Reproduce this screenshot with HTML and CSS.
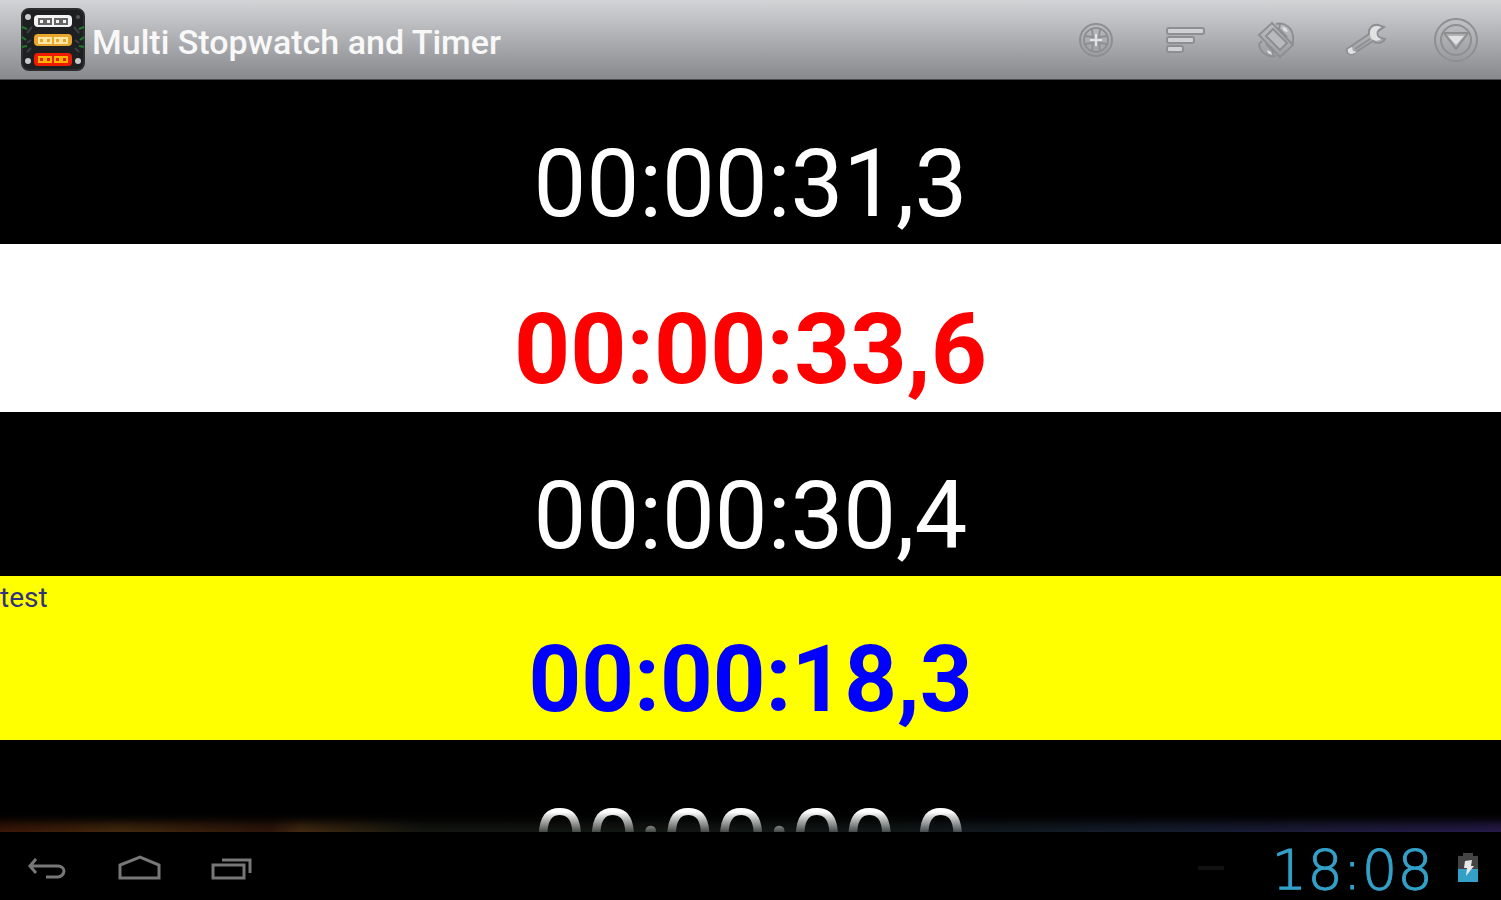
FILE: index.html
```
<!DOCTYPE html>
<html lang="en">
  <head>
    <meta charset="utf-8">
    <title>Multi Stopwatch and Timer</title>
    <link rel="stylesheet" href="styles.css">
  </head>
  <body>
    <header class="actionbar">
      <svg class="logo" width="66" height="66" viewBox="0 0 66 66" aria-hidden="true">
        <rect x="2" y="2" width="62" height="61" rx="7" fill="#1d1f20" stroke="#2c2d2f" stroke-width="2"/>
        <rect x="14" y="8" width="38" height="12" rx="4" fill="#f4f4f4"/>
        <rect x="14" y="27" width="38" height="12" rx="4" fill="#e9a62c"/>
        <rect x="14" y="46" width="38" height="13" rx="4" fill="#ee1c00"/>
        <g fill="none" stroke-width="2">
          <path d="M19 12h5v5h-5zM26 12h5v5h-5zM35 12h5v5h-5zM42 12h5v5h-5z" stroke="#666"/>
          <path d="M19 31h5v5h-5zM26 31h5v5h-5zM35 31h5v5h-5zM42 31h5v5h-5z" stroke="#ffe7a6"/>
          <path d="M19 50h5v5h-5zM26 50h5v5h-5zM35 50h5v5h-5zM42 50h5v5h-5z" stroke="#ffb300"/>
          <path d="M2 20l5 2M2 30l4 3M2 40l5-1M64 20l-5 2M64 30l-4 3M64 40l-5-1" stroke="#1f7a2a"/>
          <path d="M7 26l5-6M7 36l4-3M7 45l4-4M59 26l-5-6M59 36l-4-3M59 45l-4-4" stroke="#3d4042"/>
        </g>
        <g fill="#c9cacb">
          <circle cx="8" cy="10" r="3"/>
          <circle cx="58" cy="10" r="2" fill="#555"/>
          <circle cx="8" cy="54" r="3"/>
          <circle cx="58" cy="54" r="3"/>
        </g>
      </svg>
      <h1 class="title">Multi Stopwatch and Timer</h1>
      <div class="actions">
        <button class="action" aria-label="Add">
          <svg width="44" height="44" viewBox="0 0 44 44">
            <circle class="line" cx="22" cy="22" r="16"/>
            <circle class="line" cx="22" cy="22" r="12"/>
            <path class="line" d="M18 11l1 8-8-1M26 11l-1 8 8-1M18 33l1-8-8 1M26 33l-1-8 8 1"/>
            <path class="light" d="M21 16h2v5h5v2h-5v5h-2v-5h-5v-2h5z"/>
          </svg>
        </button>
        <button class="action" aria-label="Sort">
          <svg width="44" height="44" viewBox="0 0 44 44">
            <rect class="bar" x="3" y="10" width="37" height="6" rx="2"/>
            <rect class="bar" x="3" y="19" width="27" height="6" rx="2"/>
            <rect class="bar" x="3" y="28" width="16" height="6" rx="2"/>
          </svg>
        </button>
        <button class="action" aria-label="Rotate screen">
          <svg width="44" height="44" viewBox="0 0 44 44">
            <path class="line" d="M5 17L18 5l21 22-13 12z"/>
            <path class="pale" d="M12 18l7-7 14 14-7 7z"/>
            <path class="line" d="M22 6c9-2 16 4 17 12v8M26 6l-1 5 8 8M22 38c-9 2-16-4-17-12l3-3M18 39l1-6-7-7"/>
            <path class="light" d="M28 9l4 1 2 4-4-1zM13 32l4 2 1 3-4-2z"/>
          </svg>
        </button>
        <button class="action" aria-label="Settings">
          <svg width="44" height="44" viewBox="0 0 44 44">
            <path class="line" d="M3 31l22-15c-1-6 4-10 9-9l6 2-7 5 1 5 7 2c-3 5-9 5-12 2L9 36c-4 1-7-2-6-5z"/>
            <path class="line" d="M11 31l15-10"/>
            <path class="light" d="M37 9c-7-3-12 2-11 8 1 6 7 7 11 4-6-2-6-9 0-12zM4 31l4-2 1 4 4 1-5 2c-3 0-5-2-4-5z"/>
          </svg>
        </button>
        <button class="action" aria-label="More">
          <svg width="44" height="44" viewBox="0 0 44 44">
            <circle class="line" cx="22" cy="22" r="21"/>
            <circle class="line" cx="22" cy="22" r="15"/>
            <path class="line" d="M10 15h24L22 31z"/>
            <path class="light" d="M14 18h16l-8 9z"/>
          </svg>
        </button>
      </div>
    </header>

    <main class="timers">
      <section class="timer">
        <p class="label"></p>
        <p class="time">00:00:31,3</p>
      </section>
      <section class="timer timer-white">
        <p class="label"></p>
        <p class="time">00:00:33,6</p>
      </section>
      <section class="timer">
        <p class="label"></p>
        <p class="time">00:00:30,4</p>
      </section>
      <section class="timer timer-yellow">
        <p class="label">test</p>
        <p class="time">00:00:18,3</p>
      </section>
      <section class="timer">
        <p class="label"></p>
        <p class="time">00:00:00,0</p>
      </section>
      <div class="fade"></div>
    </main>

    <footer class="navbar">
      <button class="nav" aria-label="Back">
        <svg width="44" height="32" viewBox="0 0 44 32">
          <path d="M10 4L4 11l6 7M4 11h28c3 0 6 2 6 5s-3 6-6 6H20"/>
        </svg>
      </button>
      <button class="nav" aria-label="Home">
        <svg width="44" height="32" viewBox="0 0 44 32">
          <path d="M2 23V10L22 2l19 8v13z"/>
        </svg>
      </button>
      <button class="nav" aria-label="Recent apps">
        <svg width="44" height="32" viewBox="0 0 44 32">
          <path d="M3 10h31v13H3zM12 5h28v13"/>
        </svg>
      </button>
      <div class="status">
        <span class="dash"></span>
        <time class="clock">18:08</time>
        <svg width="22" height="30" viewBox="0 0 22 30" aria-hidden="true">
          <path d="M1 3h5V0h10v3h5v14H1z" fill="#444"/>
          <path d="M1 16h20v13H1z" fill="#33a0c8"/>
          <path d="M8 8l7-1-1 6h3L9 23l1-8H7z" fill="#e8e8e8"/>
        </svg>
      </div>
    </footer>
  </body>
</html>
```
FILE: styles.css
```
* {
  box-sizing: border-box;
  margin: 0;
}

body {
  display: flex;
  flex-direction: column;
  height: 100vh;
  overflow: hidden;
  background: #000;
  color: #fff;
  font-family: Roboto, sans-serif;
}

button {
  padding: 0;
  border: 0;
  background: none;
}

svg {
  display: block;
}

/* top bar */
.actionbar {
  display: flex;
  align-items: center;
  flex: none;
  height: 80px;
  padding-left: 20px;
  gap: 6px;
  background: linear-gradient(#d3d4d6, #88898d);
  border-bottom: 1px solid #4c4c50;
}

.title {
  flex: 1;
  padding-top: 4px;
  font-size: 34px;
  font-weight: 500;
  line-height: 44px;
  white-space: nowrap;
  color: #f8f8f8;
}

.actions {
  display: flex;
}

.action {
  display: flex;
  justify-content: center;
  width: 90px;
}

.line {
  fill: none;
  stroke: #8e8f91;
  stroke-width: 2;
}

.bar {
  fill: #d0d1d2;
  stroke: #8e8f91;
  stroke-width: 2;
}

.light {
  fill: #e2e2e3;
}

.pale {
  fill: #b9babc;
  stroke: #8e8f91;
  stroke-width: 2;
}

/* stopwatch list */
.timers {
  flex: 1;
  min-height: 0;
  overflow: hidden;
  position: relative;
}

.label {
  height: 44px;
  font-size: 28px;
  line-height: 44px;
}

.time {
  font-size: 94px;
  line-height: 120px;
  text-align: center;
}

.timer-white {
  background: #fff;
  color: #f00;
}

.timer-white .time {
  font-size: 98px;
  font-weight: 700;
  line-height: 124px;
}

.timer-yellow {
  background: #ff0;
  color: #00f;
}

.timer-yellow .label {
  color: #33337a;
}

.timer-yellow .time {
  font-size: 92px;
  font-weight: 700;
}

.fade {
  position: absolute;
  right: 0;
  bottom: 0;
  left: 0;
  height: 20px;
  background:
    linear-gradient(#000, transparent) top / 100% 12px no-repeat,
    linear-gradient(to right, #4a1a08, #553410 8%, #3a1a0c 18%, #553514 20%, #181c14 28%, #141c1c 60%, #182436 75%, #30225e);
  -webkit-mask-image: linear-gradient(transparent, rgba(0, 0, 0, 0.8));
  mask-image: linear-gradient(transparent, rgba(0, 0, 0, 0.8));
}

/* system bar */
.navbar {
  display: flex;
  align-items: center;
  flex: none;
  height: 68px;
  padding: 4px 22px 0 26px;
  gap: 48px;
}

.nav {
  padding-top: 6px;
}

.nav path {
  fill: none;
  stroke: #777;
  stroke-width: 3;
}

.status {
  display: flex;
  align-items: center;
  gap: 24px;
  margin-left: auto;
}

.dash {
  width: 26px;
  height: 4px;
  margin-right: 24px;
  background: #111;
}

.clock {
  padding-top: 4px;
  font-family: "DejaVu Sans Light", "DejaVu Sans ExtraLight", "DejaVu Sans", sans-serif;
  font-size: 56px;
  font-weight: 200;
  line-height: 60px;
  color: #33a0c8;
  -webkit-text-stroke: 1px #33a0c8;
}
```
